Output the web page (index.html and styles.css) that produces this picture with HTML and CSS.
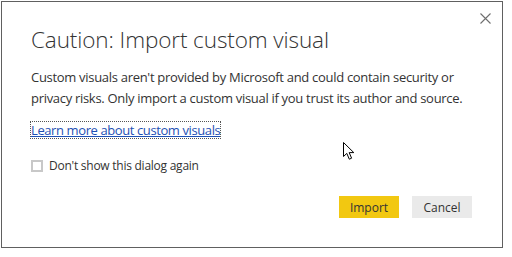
FILE: index.html
```html
<!DOCTYPE html>
<html lang="en">
<head>
    <meta charset="UTF-8">
    <title>Caution: Import custom visual</title>
    <link rel="stylesheet" href="styles.css">
</head>
<body>

    <div class="dialog">
        <button type="button" class="close" aria-label="Close">
            <svg width="11" height="11" viewBox="0 0 11 11">
                <path d="M0.5 0.5 L10.5 10.5 M10.5 0.5 L0.5 10.5" stroke="#6e6e6e" stroke-width="1.1" fill="none"/>
            </svg>
        </button>

        <h1 class="title">Caution: Import custom visual</h1>

        <p class="message">Custom visuals aren't provided by Microsoft and could contain security or privacy risks. Only import a custom visual if you trust its author and source.</p>

        <a href="#" class="learn-more">Learn more about custom visuals</a>

        <label class="dont-show">
            <span class="box"></span>
            Don't show this dialog again
        </label>

        <div class="actions">
            <button type="button" class="btn primary">Import</button>
            <button type="button" class="btn">Cancel</button>
        </div>

        <!-- mouse pointer captured in the screenshot -->
        <svg class="pointer" width="13" height="19" viewBox="0 0 13 19">
            <path d="M0.5 0.5 L0.5 14.5 L3.8 11.4 L6.3 17.2 L8.6 16.2 L6.2 10.6 L10.8 10.6 Z" fill="#fff" stroke="#000" stroke-width="1" stroke-linejoin="miter"/>
        </svg>
    </div>

</body>
</html>
```

FILE: styles.css
```css
body {
    margin: 0;
    background-color: #fff;
    font-family: "Open Sans", "Noto Sans", sans-serif;
    color: #333;
}
.dialog {
    position: relative;
    box-sizing: border-box;
    width: 502px;
    height: 247px;
    margin: 1px 0 0 1px;
    padding: 0 30px 0 29px;
    border: 1px solid #606060;
    background-color: #fff;
    font-size: 13px;
    line-height: 16px;
}
.close {
    position: absolute;
    top: 11px;
    right: 11px;
    padding: 0;
    border: none;
    background: none;
    line-height: 0;
}
.title {
    margin: 0;
    padding-top: 23px;
    font-size: 22.5px;
    font-weight: 300;
    line-height: 30px;
    letter-spacing: -0.1px;
    color: #333;
}
.message {
    margin: 12px 0 0;
    font-size: 13px;
    line-height: 21px;
    letter-spacing: -0.3px;
    color: #333;
}
.learn-more {
    display: block;
    width: fit-content;
    margin-top: 13px;
    font-size: 13px;
    line-height: 16px;
    letter-spacing: -0.4px;
    color: #1e50b4;
    outline: 1px dotted #555;
}
.dont-show {
    display: flex;
    align-items: center;
    gap: 6px;
    margin-top: 20px;
    font-size: 12px;
    line-height: 16px;
    letter-spacing: -0.25px;
    color: #333;
}
.box {
    box-sizing: border-box;
    width: 12px;
    height: 12px;
    border: 2px solid #c8c8c8;
}
.actions {
    display: flex;
    justify-content: flex-end;
    gap: 13px;
    margin-top: 22px;
}
.btn {
    width: 60px;
    height: 22px;
    padding: 0;
    border: none;
    font-family: inherit;
    font-size: 12px;
    color: #333;
    background-color: #eaeaea;
}
.btn.primary {
    background-color: #f2c811;
}
.pointer {
    position: absolute;
    top: 140px;
    left: 341px;
}
```
